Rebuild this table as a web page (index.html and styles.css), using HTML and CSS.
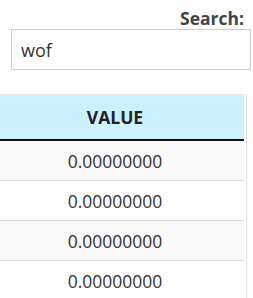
FILE: index.html
```html
<!DOCTYPE html>
<html>
<head>
<meta charset="utf-8">
<link rel="stylesheet" href="styles.css">
</head>
<body>
<div class="filter">
  <label class="filter-label">Search:</label>
  <input class="filter-input" type="search" value="wof">
</div>
<div class="table-wrap">
  <table class="data">
    <thead>
      <tr><th>VALUE</th></tr>
    </thead>
    <tbody>
      <tr class="odd"><td>0.00000000</td></tr>
      <tr><td>0.00000000</td></tr>
      <tr class="odd"><td>0.00000000</td></tr>
      <tr><td>0.00000000</td></tr>
    </tbody>
  </table>
</div>
</body>
</html>
```

FILE: styles.css
```css
html, body {
  margin: 0;
  padding: 0;
  background: #fff;
  font-family: "Open Sans", "Noto Sans", sans-serif;
  color: #333;
  overflow: hidden;
}

.filter {
  display: flex;
  flex-direction: column;
  align-items: flex-end;
  padding: 8px 2px 0 0;
}

.filter-label {
  font-weight: 700;
  font-size: 17.5px;
  line-height: 20px;
  color: #444;
  padding-right: 7px;
}

.filter-input {
  box-sizing: border-box;
  width: 240px;
  height: 41px;
  margin: 1px 0 0 0;
  padding: 0 9px;
  border: 1px solid #ccc;
  font-family: "Open Sans", sans-serif;
  font-size: 18px;
  color: #333;
  outline: none;
  -webkit-appearance: none;
  appearance: none;
}

.table-wrap {
  margin-top: 24px;
  width: 246px;
  border-right: 1px solid #ddd;
  overflow: hidden;
}

.data {
  border-collapse: collapse;
  margin-left: -14px;
  width: 258px;
}

.data th {
  background: #cdf1fe;
  color: #222;
  font-weight: 700;
  font-size: 17.5px;
  height: 44px;
  padding: 0;
  border-top: 1px solid #e4e4e4;
  border-bottom: 2px solid #111;
  text-align: center;
}

.data td {
  height: 39px;
  padding: 0;
  font-size: 17.5px;
  color: #333;
  text-align: center;
  border-bottom: 1px solid #ddd;
}

.data tr.odd td {
  background: #f9f9f9;
}
```
